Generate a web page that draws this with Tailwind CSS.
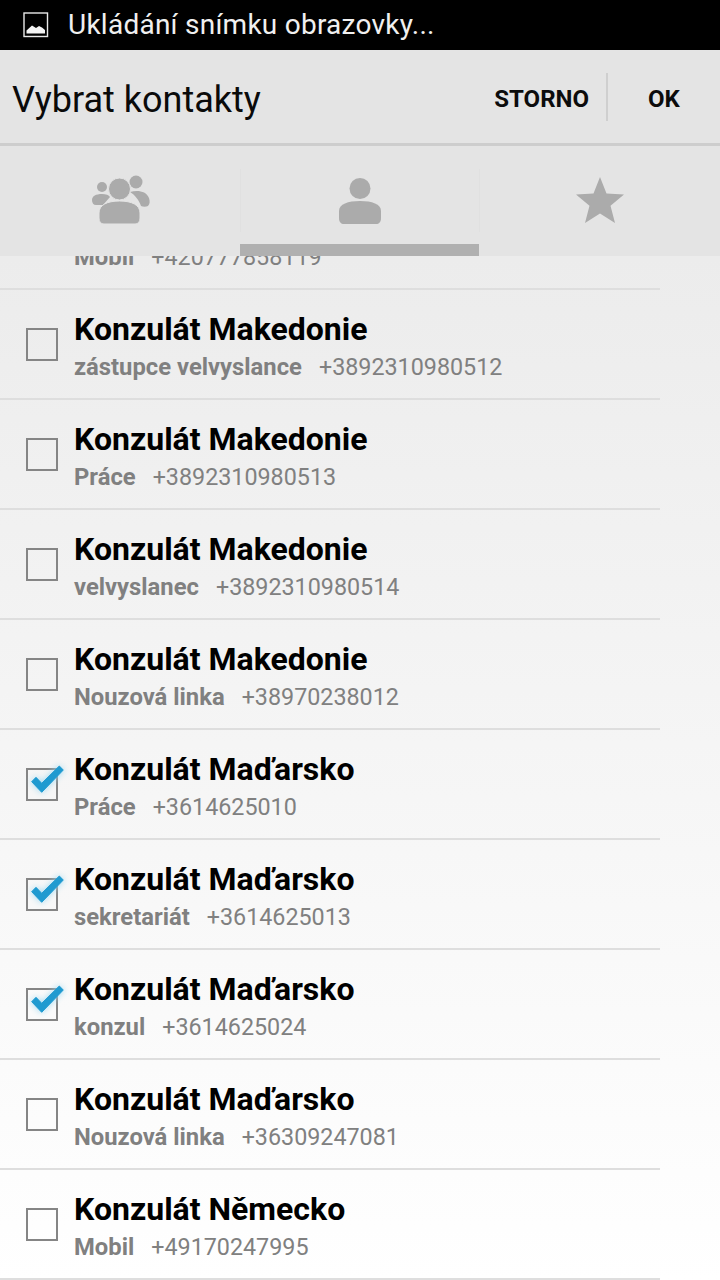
<!DOCTYPE html>
<html lang="en">
<head>
    <meta charset="UTF-8">
    <meta name="viewport" content="width=device-width, initial-scale=1.0">
    <script src="https://cdn.jsdelivr.net/npm/@tailwindcss/browser@4"></script>
    <title>Vybrat kontakty</title>
</head>
<body class="font-['Roboto',sans-serif]">
<div class="w-[720px] h-[1280px] overflow-hidden flex flex-col bg-white">

    <!-- status bar -->
    <div class="h-[50px] shrink-0 bg-black flex items-center pl-[23px] text-[#f0f0f0]">
        <svg class="w-[26px] h-[26px]" viewBox="0 0 26 26">
            <rect x="1" y="1" width="23.5" height="23.5" fill="none" stroke="#e8e8e8" stroke-width="1.4"/>
            <path d="M3.500 21.500V18.500L9 13.500L13 16L16 14L19 15.500L22 18V21.500Z" fill="#f4f4f4"/>
        </svg>
        <span class="ml-[19px] text-[28px] leading-none tracking-[0.25px]">Ukládání snímku obrazovky...</span>
    </div>

    <!-- action bar -->
    <div class="h-[96px] shrink-0 bg-[#e4e4e4] border-b-[3px] border-[#cdcdcd] flex items-center">
        <h1 class="pl-[12px] flex-1 text-[36px] leading-none text-[#0a0a0a] mt-[6px]">Vybrat kontakty</h1>
        <span class="text-[24px] font-bold leading-none text-[#0c0c0c] pr-[17px] mt-[4px]">STORNO</span>
        <div class="w-[2px] h-[48px] bg-[#cfcfcf] mt-[1px]"></div>
        <span class="w-[112px] pl-[40px] text-[24px] font-bold leading-none text-[#0c0c0c] mt-[4px]">OK</span>
    </div>

    <!-- tabs -->
    <div class="relative z-10 h-[110px] shrink-0 bg-[#e4e4e4] grid grid-cols-[240px_239px_241px]">
        <div class="flex items-center justify-center pb-[2px]">
            <svg class="w-[60px] h-[52px]" viewBox="0 0 60 52" fill="#ababab">
                <circle cx="12" cy="13" r="5"/>
                <path d="M2 26C2 22 6 20 12 20C16 20 19 21 20 23L13 31H6C3.500 31 2 29 2 26Z"/>
                <circle cx="46" cy="8" r="6.500"/>
                <path d="M40 18C48 16 56 17 59 24C60 27 60 30 58 32C56 33 53 33 51 32C49 26 45 21 40 18Z"/>
                <circle cx="29.500" cy="15" r="11" stroke="#e4e4e4" stroke-width="1"/>
                <path d="M9 39C9 31 17 27 29.500 27C42 27 50 31 50 39V44C50 48 48 50 45 50H14C11 50 9 48 9 44Z" stroke="#e4e4e4" stroke-width="1"/>
            </svg>
        </div>
        <div class="relative flex items-center justify-center">
            <div class="absolute left-0 top-[23px] h-[63px] w-px bg-[#e0e0e0]"></div>
            <svg class="w-[42px] h-[46px]" viewBox="0 0 42 46" fill="#ababab">
                <circle cx="21" cy="10.500" r="10.500"/>
                <path d="M0 33C0 26 9 23 21 23C33 23 42 26 42 33V40C42 44 40 46 37 46H5C2 46 0 44 0 40Z"/>
            </svg>
            <div class="absolute left-0 right-0 bottom-0 h-[12px] bg-[#b0b0b0]"></div>
        </div>
        <div class="relative flex items-center justify-center pb-[2px]">
            <div class="absolute left-0 top-[23px] h-[63px] w-px bg-[#e0e0e0]"></div>
            <svg class="w-[48px] h-[46px]" viewBox="0 0 48 46" fill="#ababab">
                <path d="M24 0L30.500 16.500L48 17.500L34.500 28.800L39 46L24 36.500L9 46L13.500 28.800L0 17.500L17.500 16.500Z"/>
            </svg>
        </div>
    </div>

    <!-- contact list, scrolled so the first row sits under the tabs -->
    <div class="flex-1 overflow-hidden bg-gradient-to-b from-[#ececec] to-white">
        <ul class="-mt-[76px] w-[660px]">
            <li class="h-[110px] border-b-2 border-[#dedede] flex items-center">
                <div class="w-[74px] shrink-0"></div>
                <div class="pt-[4px]">
                    <div class="text-[32px] font-bold leading-[36px] text-black">Konzulát Makedonie</div>
                    <div class="flex gap-[17px] text-[23.3px] leading-[30px] text-[#808080] mt-[5px]"><span class="font-bold text-[23.8px]">Mobil</span><span>+420777858119</span></div>
                </div>
            </li>
            <li class="h-[110px] border-b-2 border-[#dedede] flex items-center">
                <div class="w-[74px] shrink-0 pl-[26px]"><div class="w-[32px] h-[33px] border-2 border-[#858585]"></div></div>
                <div class="pt-[4px]">
                    <div class="text-[32px] font-bold leading-[36px] text-black">Konzulát Makedonie</div>
                    <div class="flex gap-[17px] text-[23.3px] leading-[30px] text-[#808080] mt-[5px]"><span class="font-bold text-[23.8px]">zástupce velvyslance</span><span>+3892310980512</span></div>
                </div>
            </li>
            <li class="h-[110px] border-b-2 border-[#dedede] flex items-center">
                <div class="w-[74px] shrink-0 pl-[26px]"><div class="w-[32px] h-[33px] border-2 border-[#858585]"></div></div>
                <div class="pt-[4px]">
                    <div class="text-[32px] font-bold leading-[36px] text-black">Konzulát Makedonie</div>
                    <div class="flex gap-[17px] text-[23.3px] leading-[30px] text-[#808080] mt-[5px]"><span class="font-bold text-[23.8px]">Práce</span><span>+3892310980513</span></div>
                </div>
            </li>
            <li class="h-[110px] border-b-2 border-[#dedede] flex items-center">
                <div class="w-[74px] shrink-0 pl-[26px]"><div class="w-[32px] h-[33px] border-2 border-[#858585]"></div></div>
                <div class="pt-[4px]">
                    <div class="text-[32px] font-bold leading-[36px] text-black">Konzulát Makedonie</div>
                    <div class="flex gap-[17px] text-[23.3px] leading-[30px] text-[#808080] mt-[5px]"><span class="font-bold text-[23.8px]">velvyslanec</span><span>+3892310980514</span></div>
                </div>
            </li>
            <li class="h-[110px] border-b-2 border-[#dedede] flex items-center">
                <div class="w-[74px] shrink-0 pl-[26px]"><div class="w-[32px] h-[33px] border-2 border-[#858585]"></div></div>
                <div class="pt-[4px]">
                    <div class="text-[32px] font-bold leading-[36px] text-black">Konzulát Makedonie</div>
                    <div class="flex gap-[17px] text-[23.3px] leading-[30px] text-[#808080] mt-[5px]"><span class="font-bold text-[23.8px]">Nouzová linka</span><span>+38970238012</span></div>
                </div>
            </li>
            <li class="h-[110px] border-b-2 border-[#dedede] flex items-center">
                <div class="w-[74px] shrink-0 pl-[26px]">
                    <div class="relative w-[32px] h-[33px] border-2 border-[#858585]">
                        <svg class="absolute -left-[2px] -top-[6px] w-[42px] h-[34px] overflow-visible drop-shadow-[0_0_3px_#9ad8f2]" viewBox="0 0 42 34"><path d="M5.700 17.700L15.700 28.300L37.300 6L33.300 2L15.700 19.300L10 13.300Z" fill="#1f9ad0" stroke="#1f9ad0" stroke-linejoin="round"/></svg>
                    </div>
                </div>
                <div class="pt-[4px]">
                    <div class="text-[32px] font-bold leading-[36px] text-black">Konzulát Maďarsko</div>
                    <div class="flex gap-[17px] text-[23.3px] leading-[30px] text-[#808080] mt-[5px]"><span class="font-bold text-[23.8px]">Práce</span><span>+3614625010</span></div>
                </div>
            </li>
            <li class="h-[110px] border-b-2 border-[#dedede] flex items-center">
                <div class="w-[74px] shrink-0 pl-[26px]">
                    <div class="relative w-[32px] h-[33px] border-2 border-[#858585]">
                        <svg class="absolute -left-[2px] -top-[6px] w-[42px] h-[34px] overflow-visible drop-shadow-[0_0_3px_#9ad8f2]" viewBox="0 0 42 34"><path d="M5.700 17.700L15.700 28.300L37.300 6L33.300 2L15.700 19.300L10 13.300Z" fill="#1f9ad0" stroke="#1f9ad0" stroke-linejoin="round"/></svg>
                    </div>
                </div>
                <div class="pt-[4px]">
                    <div class="text-[32px] font-bold leading-[36px] text-black">Konzulát Maďarsko</div>
                    <div class="flex gap-[17px] text-[23.3px] leading-[30px] text-[#808080] mt-[5px]"><span class="font-bold text-[23.8px]">sekretariát</span><span>+3614625013</span></div>
                </div>
            </li>
            <li class="h-[110px] border-b-2 border-[#dedede] flex items-center">
                <div class="w-[74px] shrink-0 pl-[26px]">
                    <div class="relative w-[32px] h-[33px] border-2 border-[#858585]">
                        <svg class="absolute -left-[2px] -top-[6px] w-[42px] h-[34px] overflow-visible drop-shadow-[0_0_3px_#9ad8f2]" viewBox="0 0 42 34"><path d="M5.700 17.700L15.700 28.300L37.300 6L33.300 2L15.700 19.300L10 13.300Z" fill="#1f9ad0" stroke="#1f9ad0" stroke-linejoin="round"/></svg>
                    </div>
                </div>
                <div class="pt-[4px]">
                    <div class="text-[32px] font-bold leading-[36px] text-black">Konzulát Maďarsko</div>
                    <div class="flex gap-[17px] text-[23.3px] leading-[30px] text-[#808080] mt-[5px]"><span class="font-bold text-[23.8px]">konzul</span><span>+3614625024</span></div>
                </div>
            </li>
            <li class="h-[110px] border-b-2 border-[#dedede] flex items-center">
                <div class="w-[74px] shrink-0 pl-[26px]"><div class="w-[32px] h-[33px] border-2 border-[#858585]"></div></div>
                <div class="pt-[4px]">
                    <div class="text-[32px] font-bold leading-[36px] text-black">Konzulát Maďarsko</div>
                    <div class="flex gap-[17px] text-[23.3px] leading-[30px] text-[#808080] mt-[5px]"><span class="font-bold text-[23.8px]">Nouzová linka</span><span>+36309247081</span></div>
                </div>
            </li>
            <li class="h-[110px] border-b-2 border-[#dedede] flex items-center">
                <div class="w-[74px] shrink-0 pl-[26px]"><div class="w-[32px] h-[33px] border-2 border-[#858585]"></div></div>
                <div class="pt-[4px]">
                    <div class="text-[32px] font-bold leading-[36px] text-black">Konzulát Německo</div>
                    <div class="flex gap-[17px] text-[23.3px] leading-[30px] text-[#808080] mt-[5px]"><span class="font-bold text-[23.8px]">Mobil</span><span>+49170247995</span></div>
                </div>
            </li>
        </ul>
    </div>
</div>
</body>
</html>
